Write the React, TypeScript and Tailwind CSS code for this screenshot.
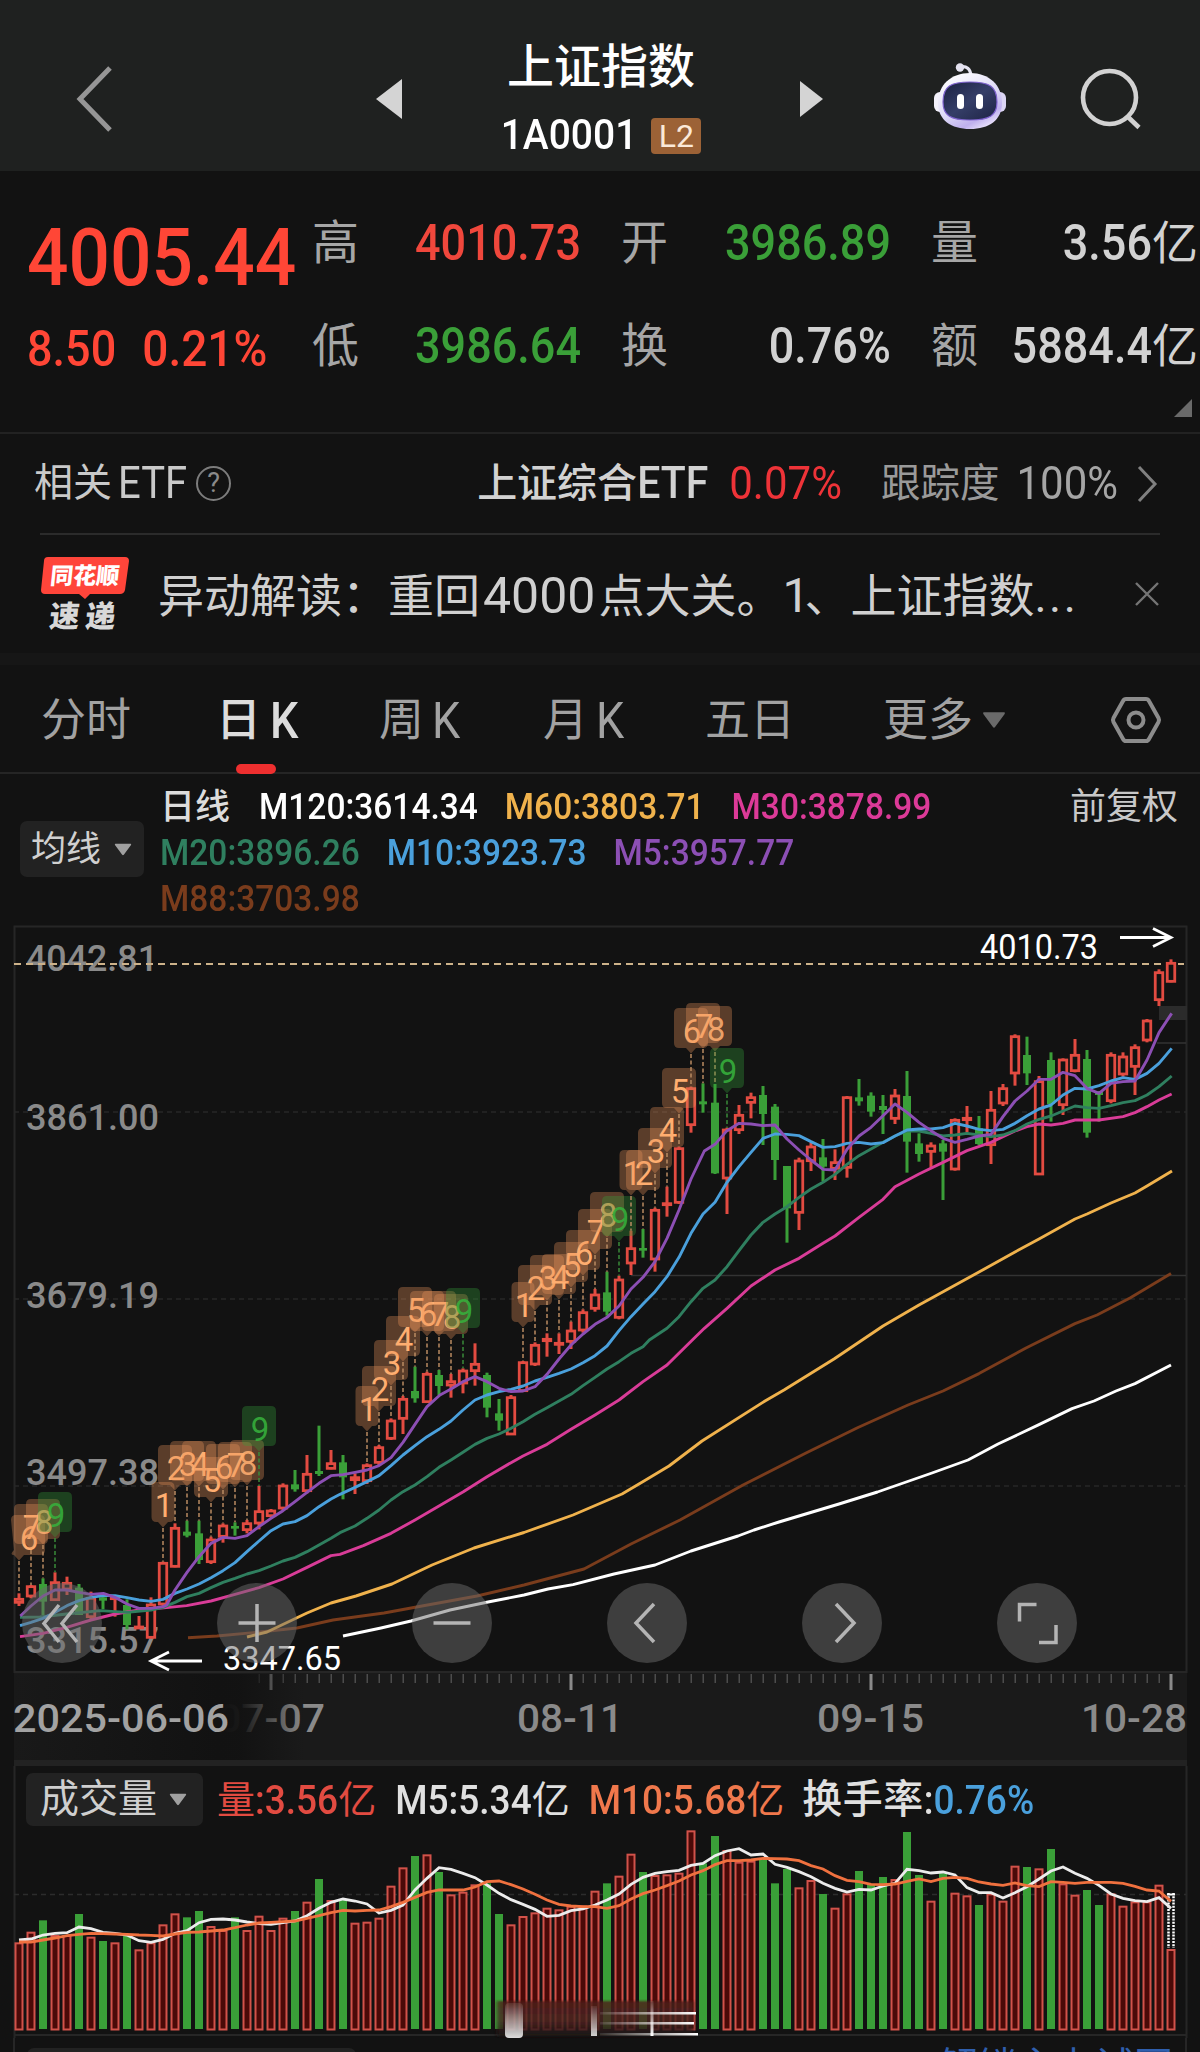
import React from "react";
import clsx from "clsx";

const STEP = 12;
const FIRST_X = 19;
const RED = "#e24b41";
const GREEN = "#3a9f38";
const FONT = "Roboto, 'Noto Sans CJK SC', sans-serif";

type Candle = ["r" | "g", number, number, number, number];
type Point = [number, number];

/**
 * Candles: direction, high, body top, body bottom, low.
 * Values are thirds of a pixel below the block's base line.
 */
const CANDLE_BLOCKS: { base: number; rows: Candle[] }[] = [
  {
    base: 1360,
    rows: [
      ["r", 700, 715, 730, 738], ["r", 675, 677, 711, 715], ["g", 655, 672, 725, 765],
      ["r", 637, 665, 722, 722], ["r", 650, 667, 690, 705], ["g", 672, 683, 765, 765],
      ["r", 695, 712, 773, 778], ["g", 705, 712, 722, 748], ["r", 705, 710, 718, 770],
      ["g", 718, 735, 795, 808], ["r", 768, 798, 805, 805], ["r", 712, 732, 835, 835],
      ["r", 605, 607, 735, 740], ["r", 490, 502, 622, 622], ["g", 482, 515, 527, 532],
      ["g", 482, 520, 600, 612], ["r", 530, 537, 608, 612], ["r", 490, 495, 532, 548],
      ["g", 487, 498, 506, 527], ["r", 480, 488, 512, 520], ["r", 378, 452, 492, 508],
      ["r", 447, 450, 470, 472], ["r", 370, 375, 447, 450], ["g", 330, 373, 388, 395],
      ["r", 285, 340, 395, 400], ["g", 197, 333, 342, 348], ["r", 270, 308, 328, 328],
      ["g", 285, 307, 352, 418], ["r", 340, 350, 362, 402],
    ],
  },
  {
    base: 1180,
    rows: [
      ["r", 850, 854, 905, 912], ["r", 795, 800, 850, 855], ["r", 715, 720, 778, 780],
      ["r", 648, 655, 718, 762], ["g", 560, 633, 655, 668], ["r", 575, 580, 668, 668],
      ["g", 570, 585, 618, 645], ["r", 582, 602, 618, 653], ["r", 565, 570, 612, 640],
      ["r", 490, 550, 575, 617], ["g", 578, 585, 683, 712], ["g", 657, 700, 722, 752],
      ["r", 645, 650, 765, 765], ["r", 543, 545, 635, 635], ["r", 487, 493, 555, 558],
      ["r", 460, 475, 485, 530], ["r", 460, 487, 495, 522], ["r", 425, 450, 487, 507],
      ["r", 388, 395, 453, 458], ["r", 327, 342, 388, 395], ["g", 275, 337, 395, 407],
      ["r", 287, 297, 415, 418], ["r", 152, 203, 252, 285], ["g", 147, 204, 212, 233],
      ["r", 83, 88, 240, 275], ["r", 20, 68, 76, 110],
    ],
  },
  {
    base: 980,
    rows: [
      ["r", 500, 503, 670, 672], ["r", 320, 323, 437, 458], ["g", 310, 364, 373, 398],
      ["g", 312, 368, 580, 582], ["r", 443, 447, 597, 702], ["r", 375, 403, 452, 462],
      ["r", 338, 350, 370, 415], ["g", 318, 345, 402, 495], ["g", 372, 380, 540, 600],
      ["g", 558, 558, 685, 788], ["r", 533, 540, 700, 750], ["r", 487, 498, 545, 573],
      ["g", 477, 532, 560, 603], ["r", 508, 545, 568, 600], ["r", 348, 350, 565, 593],
      ["g", 297, 352, 364, 377], ["g", 337, 347, 395, 410], ["g", 345, 378, 390, 462],
      ["r", 327, 345, 418, 432], ["g", 273, 348, 485, 578],
    ],
  },
  {
    base: 920,
    rows: [
      ["g", 640, 670, 702, 725], ["r", 667, 675, 697, 743], ["g", 660, 670, 695, 840],
      ["r", 595, 598, 750, 752], ["r", 558, 592, 602, 637], ["g", 588, 625, 672, 675],
      ["r", 513, 568, 677, 732], ["r", 492, 503, 552, 558], ["r", 343, 347, 462, 497],
      ["g", 350, 405, 460, 495], ["r", 468, 482, 765, 765], ["g", 397, 420, 552, 605],
      ["r", 415, 417, 557, 585], ["r", 357, 403, 455, 457], ["g", 390, 417, 638, 653],
      ["g", 513, 515, 525, 605], ["r", 397, 403, 545, 550], ["r", 397, 408, 465, 470],
      ["r", 373, 380, 442, 525], ["r", 297, 300, 363, 367], ["r", 148, 155, 242, 258],
      ["r", 118, 127, 187, 187],
    ],
  },
];

const CANDLES = CANDLE_BLOCKS.flatMap(({ base, rows }) =>
  rows.map(([dir, high, top, bottom, low]) => ({
    dir,
    high: base + high / 3,
    top: base + top / 3,
    bottom: base + bottom / 3,
    low: base + low / 3,
  }))
);

/** Nine-turn counters: first candle index and the top of every badge */
const COUNTS: { from: number; start: number; tops: number[] }[] = [
  { from: 0, start: 6, tops: [1515, 1504, 1499, 1492] },
  { from: 12, start: 1, tops: [1482, 1445, 1441, 1441, 1457, 1444, 1442, 1440, 1406] },
  { from: 29, start: 1, tops: [1386, 1366, 1340, 1316, 1287, 1291, 1291, 1294, 1288] },
  { from: 42, start: 1, tops: [1282, 1265, 1255, 1254, 1242, 1230, 1209, 1192, 1196] },
  { from: 51, start: 1, tops: [1150, 1150, 1128, 1107, 1068, 1008, 1003, 1006, 1048] },
];

/** Scales a piece of a line, given in thirds of a pixel, to the chart */
const piece = (x: number, y: number, pts: Point[]): Point[] =>
  pts.map(([px, py]) => [x + px / 3, y + py / 3]);

const AVERAGES: { color: string; points: Point[] }[] = [
  {
    color: "#ffffff",
    points: [
      [343, 1636], [381, 1628], [411, 1621], [450, 1610], [488, 1602], [524, 1595], [548, 1589], [573, 1584.6],
      [614, 1574], [655, 1565], [691, 1551], [738, 1536], [754, 1530], [779, 1522], [839, 1504], [877.5, 1492],
      [932, 1473], [968, 1460], [998, 1444], [1039, 1424.6], [1072, 1408.6], [1094, 1401], [1116, 1391],
      [1135, 1383.6], [1171, 1365],
    ],
  },
  {
    color: "#7a3c1c",
    points: [
      [188, 1637.7], [217, 1636], [260, 1632], [297, 1628], [333, 1620], [384, 1613], [422, 1606], [477, 1596],
      [524, 1585], [584, 1569], [631, 1544], [680, 1520], [743, 1485], [806, 1453], [858, 1427.5], [908, 1405],
      [943, 1391], [979, 1373.6], [1026, 1348], [1075, 1323.6], [1097, 1315], [1130, 1298], [1171, 1273.6],
    ],
  },
  {
    color: "#f0b24c",
    points: [
      [247, 1637], [267, 1632], [297, 1617.7], [307, 1613], [331, 1603], [356, 1596], [392, 1584], [432, 1565],
      [474, 1548], [524, 1532.5], [573, 1515], [622, 1494], [644, 1481], [669, 1466], [702, 1441], [765, 1401],
      [784, 1390], [834, 1359], [883, 1326], [919, 1305], [979, 1272], [1015, 1252], [1039, 1239], [1075, 1219],
      [1087, 1214], [1111, 1203], [1135, 1193], [1147, 1186], [1172, 1171],
    ],
  },
  {
    color: "#d93c98",
    points: [
      ...piece(0, 1360, [[60, 830], [129, 820], [200, 802], [273, 780], [345, 762], [417, 750], [500, 743], [560, 737], [633, 723], [705, 703], [777, 683], [849, 657], [921, 622], [993, 587]]),
      ...piece(340, 1180, [[0, 1123], [70, 1097], [153, 1060], [225, 1020], [297, 978], [370, 935], [441, 890], [513, 848], [549, 828], [621, 793], [693, 748], [765, 705], [837, 660], [909, 605], [981, 555]]),
      ...piece(600, 980, [[277, 1080], [313, 1045], [381, 985], [453, 918], [525, 870], [597, 835], [669, 790], [705, 768], [777, 712], [849, 658]]),
      ...piece(880, 920, [[45, 800], [117, 762], [189, 727], [261, 692], [333, 667], [405, 633], [441, 620], [477, 612], [513, 615], [549, 610], [585, 600], [657, 600], [729, 590], [765, 578], [801, 560], [837, 540], [875, 522]]),
    ],
  },
  {
    color: "#2f7f5f",
    points: [
      ...piece(0, 1360, [[60, 772], [120, 771], [200, 762], [300, 752], [381, 757], [453, 750], [489, 742], [525, 727], [561, 710], [597, 700], [633, 683], [669, 667], [705, 655], [741, 642], [777, 632], [813, 618], [849, 603], [885, 592], [921, 575], [957, 555], [993, 535]]),
      ...piece(340, 1180, [[0, 1058], [45, 1038], [81, 1015], [117, 990], [153, 960], [189, 935], [225, 915], [261, 890], [297, 862], [333, 840], [369, 817], [405, 793], [441, 775], [477, 762], [513, 745], [549, 725], [585, 703], [621, 683], [657, 663], [693, 643], [729, 617], [765, 592], [801, 567], [837, 545], [873, 520], [909, 500]]),
      ...piece(600, 980, [[148, 1080], [201, 1045], [237, 1010], [273, 965], [309, 925], [345, 900], [381, 860], [417, 812], [453, 765], [489, 727], [525, 702], [561, 680], [597, 652], [633, 627], [669, 607], [705, 583], [741, 553], [777, 527], [813, 507]]),
      ...piece(880, 920, [[9, 667], [45, 648], [81, 633], [117, 633], [153, 640], [189, 648], [225, 645], [261, 640], [297, 645], [333, 650], [369, 645], [405, 632], [441, 612], [477, 598], [513, 588], [549, 573], [585, 558], [621, 563], [657, 565], [693, 557], [729, 548], [765, 542], [801, 525], [837, 500], [875, 468]]),
    ],
  },
  {
    color: "#4aa0dc",
    points: [
      ...piece(0, 1360, [[60, 797], [93, 787], [129, 775], [165, 757], [201, 737], [237, 722], [273, 712], [310, 707], [345, 707], [381, 713], [417, 720], [453, 724], [489, 718], [525, 700], [561, 687], [597, 672], [633, 653], [669, 632], [705, 608], [741, 575], [777, 543], [813, 512], [849, 492], [885, 485], [921, 467], [957, 440], [993, 417]]),
      ...piece(340, 1180, [[0, 943], [45, 922], [81, 905], [117, 887], [153, 857], [189, 825], [225, 797], [261, 770], [297, 748], [333, 723], [369, 690], [405, 660], [441, 645], [477, 635], [513, 628], [549, 618], [585, 603], [621, 592], [657, 580], [693, 567], [729, 548], [765, 527], [801, 498]]),
      ...piece(600, 980, [[57, 1052], [93, 1010], [129, 972], [165, 935], [201, 890], [237, 832], [273, 760], [309, 702], [345, 667], [381, 607], [417, 560], [453, 517], [489, 475], [525, 462], [561, 463], [597, 467], [633, 485], [669, 502], [705, 500], [741, 490], [777, 487], [813, 492]]),
      ...piece(880, 920, [[9, 668], [45, 648], [81, 630], [117, 627], [153, 627], [189, 623], [225, 610], [261, 618], [297, 628], [333, 632], [369, 628], [405, 610], [441, 587], [477, 567], [513, 555], [549, 525], [585, 505], [621, 507], [657, 497], [693, 483], [729, 473], [765, 478], [801, 460], [837, 430], [875, 385]]),
    ],
  },
  {
    color: "#8c4fb4",
    points: [
      ...piece(0, 1360, [[61, 768], [93, 738], [129, 708], [165, 690], [201, 690], [237, 697], [273, 703], [310, 700], [345, 712], [381, 732], [417, 745], [453, 745], [489, 740], [500, 735], [525, 690], [561, 637], [597, 590], [633, 550], [669, 532], [705, 535], [741, 527], [777, 500], [813, 475], [849, 452], [885, 425], [921, 397], [957, 370], [993, 347]]),
      ...piece(340, 1180, [[9, 884], [45, 877], [81, 870], [117, 857], [153, 833], [189, 787], [225, 733], [261, 680], [300, 645], [333, 627], [369, 605], [405, 590], [441, 605], [477, 625], [513, 635], [549, 633], [585, 620], [621, 583], [657, 537], [693, 495], [729, 462], [765, 433], [801, 412]]),
      ...piece(600, 980, [[57, 978], [93, 927], [129, 892], [165, 845], [201, 775], [237, 690], [273, 597], [313, 513], [345, 493], [381, 452], [417, 430], [453, 432], [489, 437], [525, 435], [561, 477], [597, 510], [633, 540], [669, 568], [705, 570], [741, 508], [777, 468], [813, 442], [849, 407]]),
      ...piece(880, 920, [[45, 552], [81, 577], [117, 607], [153, 632], [189, 655], [225, 667], [261, 658], [297, 648], [333, 643], [369, 590], [405, 543], [441, 513], [477, 478], [513, 478], [549, 457], [585, 467], [621, 505], [657, 520], [693, 490], [729, 485], [765, 483], [801, 420], [837, 338], [875, 280]]),
    ],
  },
];

/** Tops of the volume bars, thirds of a pixel below y = 1740 */
const VOLUMES = [
  607, 575, 541, 585, 585, 522, 590, 603, 607, 585, 628, 607, 553, 520, 532, 513, 558, 570, 532, 570, 527, 570, 533,
  513, 485, 417, 480, 480, 548, 545, 533, 437, 382, 348, 343, 396, 463, 455, 433, 430, 522, 553, 528, 517, 503, 508,
  497, 497, 452, 430, 407, 341, 396, 405, 403, 398, 271, 370, 288, 330, 365, 362, 355, 430, 387, 442, 420, 462, 503,
  460, 393, 432, 411, 417, 276, 405, 482, 400, 458, 466, 495, 460, 482, 377, 381, 385, 327, 430, 464, 450, 495, 460,
  497, 484, 484, 434, 627,
];
const GREEN_VOLUMES = new Set([
  2, 5, 7, 9, 14, 15, 18, 23, 25, 27, 33, 35, 39, 40, 49, 52, 57, 58, 62, 63, 64, 67, 70, 71, 72, 74, 75, 77, 80, 84,
  86, 89, 90,
]);
const VOLUME_MA5 = [
  600, 597, 585, 580, 578, 561, 566, 577, 580, 585, 602, 607, 598, 580, 572, 548, 538, 537, 540, 546, 551, 553, 548,
  543, 527, 505, 487, 477, 483, 492, 519, 511, 495, 450, 415, 383, 388, 400, 413, 435, 460, 479, 493, 508, 529, 526,
  512, 507, 495, 480, 462, 433, 412, 400, 395, 391, 376, 370, 347, 333, 326, 345, 342, 373, 382, 395, 410, 430, 445,
  456, 448, 450, 438, 430, 388, 392, 399, 396, 405, 443, 458, 458, 474, 458, 440, 417, 393, 381, 400, 415, 436, 462,
  475, 482, 485, 473, 505,
];
const VOLUME_MA10 = [
  606, 606, 600, 594, 587, 583, 580, 581, 582, 583, 585, 586, 588, 582, 577, 576, 573, 570, 563, 555, 549, 547, 545,
  543, 535, 527, 518, 511, 513, 511, 510, 500, 487, 472, 457, 450, 450, 450, 441, 425, 423, 434, 447, 463, 480, 493,
  498, 500, 500, 505, 497, 477, 461, 450, 437, 423, 405, 392, 374, 362, 362, 360, 355, 356, 357, 362, 377, 387, 407,
  421, 425, 433, 434, 432, 424, 417, 425, 415, 412, 415, 426, 432, 436, 429, 437, 440, 425, 427, 430, 427, 427, 427,
  430, 439, 450, 453, 484,
];

const barX = (i: number) => FIRST_X + i * STEP;
const toPoints = (pts: Point[]) => pts.map((p) => p.join(",")).join(" ");
const volumeLine = (values: number[]) => toPoints(values.map((v, i) => [barX(i), 1740 + v / 3]));

/** Tall narrow numerals */
function Num({ children, className }: { children: React.ReactNode; className?: string }) {
  return (
    <span className={clsx("inline-block scale-y-110 whitespace-nowrap leading-none", className)}>{children}</span>
  );
}

function Caret({ className }: { className?: string }) {
  return (
    <svg viewBox="0 0 20 14" className={className}>
      <path d="M1.5 0.5h17q1 0.3 0.4 1.4l-8 11q-0.9 1-1.8 0l-8-11q-0.6-1.1 0.4-1.4z" fill="currentColor" />
    </svg>
  );
}

function RobotIcon() {
  return (
    <svg viewBox="0 0 76 72" className="mb-[3px] ml-[108px] h-[72px] w-[76px]">
      <defs>
        <linearGradient id="shell" x1="0.2" y1="0" x2="0.8" y2="1">
          <stop offset="0" stopColor="#ffffff" />
          <stop offset="0.55" stopColor="#dcd8f6" />
          <stop offset="0.8" stopColor="#bfb0ee" />
          <stop offset="1" stopColor="#f4f0ff" />
        </linearGradient>
        <linearGradient id="visor" x1="0" y1="0" x2="1" y2="1">
          <stop offset="0" stopColor="#1b2140" />
          <stop offset="0.5" stopColor="#353e68" />
          <stop offset="1" stopColor="#1d2344" />
        </linearGradient>
      </defs>
      <path d="M29 6q10-2 11 9" fill="none" stroke="#e6e4f2" strokeWidth="3.2" />
      <circle cx="29" cy="6.5" r="4.2" fill="#e4e2f0" />
      <rect x="3" y="31" width="12" height="20" rx="6" fill="#f3f1fb" />
      <rect x="63" y="31" width="12" height="20" rx="6" fill="#dcd6f4" />
      <path d="M39 12C58 12 71 24 71 42C71 59 58 68 39 68C20 68 7 59 7 42C7 24 20 12 39 12Z" fill="url(#shell)" />
      <path
        d="M39 21C58 21 66 25 66 41C66 55 58 59 39 59C20 59 12 55 12 41C12 25 20 21 39 21Z"
        fill="url(#visor)"
        stroke="#7f63cf"
        strokeWidth="1.2"
      />
      <rect x="26" y="33" width="7" height="15" rx="3.5" fill="#fff" />
      <rect x="45" y="33" width="7" height="15" rx="3.5" fill="#fff" />
    </svg>
  );
}

function Header() {
  return (
    <header className="flex h-[171px] items-center bg-[#1f2120] pt-[26px]">
      <svg viewBox="0 0 40 66" className="ml-[75px] mr-px h-[66px] w-10">
        <path d="M35 2L5 33L35 64" fill="none" stroke="#969696" strokeWidth="5" />
      </svg>
      <svg viewBox="0 0 26 40" className="ml-[260px] h-10 w-[26px]">
        <path d="M26 0v40L0 20z" fill="#d4d4d4" />
      </svg>
      <div className="flex w-[398px] flex-col items-center pt-[5px] text-white">
        <div className="text-[47px] font-medium leading-[69px]">上证指数</div>
        <div className="flex h-[69px] items-center gap-[14px]">
          <Num className="text-[39px] font-medium">1A0001</Num>
          <span className="flex h-9 w-[50px] items-center justify-center rounded-[4px] bg-[#9c6236] text-[32px] leading-none text-[#fbe9d9]">
            L2
          </span>
        </div>
      </div>
      <svg viewBox="0 0 23 36" className="h-9 w-[23px]">
        <path d="M0 0v36l23-18z" fill="#d4d4d4" />
      </svg>
      <RobotIcon />
      <svg viewBox="0 0 62 62" className="ml-[73px] h-[62px] w-[62px] text-[#d2d2d2]">
        <circle cx="29.5" cy="29.5" r="26.5" fill="none" stroke="currentColor" strokeWidth="4.6" />
        <path d="M47.5 48.5L59 59.5" stroke="currentColor" strokeWidth="4.6" />
      </svg>
    </header>
  );
}

const QUOTES = [
  { label: "高", value: "4010.73", tone: "text-[#f0473c]" },
  { label: "开", value: "3986.89", tone: "text-[#3a9f38]" },
  { label: "量", value: "3.56", unit: "亿", tone: "text-[#d2d2d2]" },
  { label: "低", value: "3986.64", tone: "text-[#3a9f38]" },
  { label: "换", value: "0.76%", tone: "text-[#d2d2d2]" },
  { label: "额", value: "5884.4", unit: "亿", tone: "text-[#d2d2d2]" },
];

function QuoteBoard() {
  return (
    <section className="relative flex h-[261px]">
      <div className="w-[312px] pl-[27px] pt-[42px] text-[#ff4636]">
        <div className="flex h-[90px] items-center">
          <Num className="text-[73px] font-medium">4005.44</Num>
        </div>
        <div className="flex h-[90px] items-center gap-[26px]">
          <Num className="text-[45px] font-medium">8.50</Num>
          <Num className="text-[46px] font-medium">0.21%</Num>
        </div>
      </div>
      <div className="grid grid-cols-[269px_270px_267px] content-start gap-x-10 pt-5">
        {QUOTES.map((q) => (
          <div key={q.label} className="flex h-[103px] items-center justify-between">
            <span className="text-[47px] leading-none text-[#a6a6a6]">{q.label}</span>
            <span className={clsx("flex items-center font-medium", q.tone)}>
              <Num className="text-[45px]">{q.value}</Num>
              {q.unit && <span className="text-[46px] font-normal leading-none">{q.unit}</span>}
            </span>
          </div>
        ))}
      </div>
      <svg viewBox="0 0 18 18" className="absolute bottom-[15px] right-2 h-[18px] w-[18px]">
        <path d="M18 0v18H0z" fill="#6a6a6a" />
      </svg>
    </section>
  );
}

function EtfRow() {
  return (
    <section className="flex h-[101px] items-center border-t-2 border-[#222] pl-[34px] text-[39px] leading-none text-[#c9c9c9]">
      <span>相关</span>
      <Num className="ml-[6px] text-[40px]">ETF</Num>
      <span className="ml-[9px] flex h-[35px] w-[35px] items-center justify-center rounded-full border-2 border-[#7c7c7c] text-[27px] leading-none text-[#8a8a8a]">
        ?
      </span>
      <span className="ml-[246px] flex items-center text-[40px] font-medium text-[#d2d2d2]">
        上证综合<Num className="text-[41px]">ETF</Num>
      </span>
      <Num className="ml-[21px] text-[42px] text-[#ee3338]">0.07%</Num>
      <span className="ml-[39px] text-[39.5px] text-[#9a9a9a]">跟踪度</span>
      <Num className="ml-[17px] text-[42px] text-[#a5a5a5]">100%</Num>
      <svg viewBox="0 0 22 38" className="ml-[18px] h-[38px] w-[22px]">
        <path d="M3 2l16 17L3 36" fill="none" stroke="#808080" strokeWidth="3" />
      </svg>
    </section>
  );
}

function NewsRow() {
  return (
    <section className="mx-10 flex h-[120px] items-center border-t-2 border-[#2b2b2b]">
      <div className="relative flex h-[76px] w-[90px] flex-col">
        <svg viewBox="0 0 90 44" className="absolute left-0 top-0 h-[44px] w-[90px]">
          <path d="M8 1H85q4 0 4 4L85 34q-1 4-5 4H50l-5 5-6-5H5q-4 0-4-4L4 5q0-4 4-4z" fill="#ff453a" />
        </svg>
        <span className="relative flex h-[38px] -skew-x-6 items-center justify-center pt-0.5 text-[23px] font-black leading-none text-white">
          同花顺
        </span>
        <span className="relative flex h-[38px] -skew-x-6 items-center justify-center gap-[6px] pr-1 pt-[7px] text-[30px] font-black leading-none text-[#d8d8d8]">
          <span>速</span>
          <span>递</span>
        </span>
      </div>
      <div className="ml-[28px] flex items-center whitespace-nowrap pt-[3px] text-[46px] leading-none text-[#d0d0d0]">
        <span>异动解读：重回</span>
        <span className="ml-[3px] mr-[3px] text-[50px]">4000</span>
        <span>点大关。</span>
        <span className="-mr-[5px] text-[48px]">1</span>
        <span>、上证指数</span>
        <span className="tracking-[2.5px]">...</span>
      </div>
      <svg viewBox="0 0 26 26" className="ml-auto h-[26px] w-[26px]">
        <path d="M2 2l22 22M24 2L2 24" stroke="#757575" strokeWidth="2.4" />
      </svg>
    </section>
  );
}

function Tabs() {
  return (
    <nav className="flex h-[109px] items-center border-b-2 border-[#252525] pt-[3px] text-[45px] leading-none text-[#a2a2a2]">
      <span className="ml-[41px] w-[175px]">分时</span>
      <span className="relative flex h-full w-[163px] items-center gap-[9px] font-medium text-[#dcdcdc]">
        日<Num>K</Num>
        <i className="absolute -bottom-0.5 left-[20px] h-[10px] w-[40px] rounded-[5px] bg-[#ee2f2f]" />
      </span>
      <span className="flex w-[164px] items-center gap-2">
        周<Num>K</Num>
      </span>
      <span className="flex w-[162px] items-center gap-2">
        月<Num>K</Num>
      </span>
      <span className="w-[178px]">五日</span>
      <span className="w-[99px]">更多</span>
      <Caret className="h-[18px] w-[24px] text-[#6a6a6a]" />
      <svg viewBox="0 0 52 50" className="ml-[104px] h-[50px] w-[52px]" fill="none" stroke="#8c8c8c">
        <path d="M16 4H36Q38 4 39 6L48.500 23Q49.500 25 48.500 27L39 44Q38 46 36 46H16Q14 46 13 44L3.500 27Q2.500 25 3.500 23L13 6Q14 4 16 4Z" strokeWidth="4" />
        <circle cx="26" cy="25" r="7.500" strokeWidth="4" />
      </svg>
    </nav>
  );
}

function AverageLegend() {
  return (
    <section className="flex h-[151px] text-[33.5px] font-medium leading-none">
      <button className="ml-5 mt-[47px] flex h-[56px] w-[124px] items-center rounded-[7px] bg-[#222] pl-[11px] text-[35px] font-normal text-[#d0d0d0]">
        均线
        <Caret className="ml-[13px] h-[13px] w-[18px] text-[#a0a0a0]" />
      </button>
      <div className="ml-4 flex w-[910px] flex-col pt-[10px]">
        <div className="flex h-[46px] items-center gap-[27px]">
          <span className="mr-[2px] text-[35px] text-[#dcdcdc]">日线</span>
          <Num className="text-white">M120:3614.34</Num>
          <Num className="text-[#f0b24c]">M60:3803.71</Num>
          <Num className="text-[#dc3a98]">M30:3878.99</Num>
        </div>
        <div className="flex h-[46px] items-center gap-[27px]">
          <Num className="text-[#2f7f5f]">M20:3896.26</Num>
          <Num className="text-[#4aa0dc]">M10:3923.73</Num>
          <Num className="text-[#8c4fb4]">M5:3957.77</Num>
        </div>
        <div className="flex h-[46px] items-center">
          <Num className="text-[#7a3c1c]">M88:3703.98</Num>
        </div>
      </div>
      <span className="mt-[15px] text-[36px] font-normal text-[#c8c8c8]">前复权</span>
    </section>
  );
}

function CountBadge({ index, count, top }: { index: number; count: number; top: number }) {
  const x = barX(index);
  const half = count === 1 ? 11.5 : 17;
  // the first badge is kept inside the chart frame
  const cx = Math.max(x, 28);
  const last = count === 9;
  const high = CANDLES[index].high;
  const left = cx - half;
  const right = cx + half;
  const bottom = top + 40;
  return (
    <g>
      <path
        d={`M${x} ${top + 46}V${high}`}
        stroke={last ? "#3a8a3a" : "#b98a62"}
        strokeWidth="1.500"
        strokeDasharray="4 2.500"
      />
      <path
        d={`M${left + 5} ${top}H${right - 5}q5 0 5 5V${bottom - 5}q0 5 -5 5H${x + 5}L${x} ${bottom + 5.5}L${x - 5} ${bottom}H${Math.min(left + 5, x - 5)}q-5 0 ${left + 5 > x - 5 ? 0 : -5} -5L${left} ${top + 5}q0 -5 5 -5z`}
        fill={last ? "#34a03a" : "#e8935a"}
        fillOpacity={last ? 0.33 : 0.34}
      />
      <text
        x={cx + 1}
        y={top + 34.5}
        textAnchor="middle"
        fontSize="33"
        fontFamily="Roboto, sans-serif"
        fill={last ? "#37b03c" : "#ffae70"}
        fillOpacity={count === 8 || last ? 0.9 : 1}
      >
        {count}
      </text>
    </g>
  );
}

function AxisLabel({ x, y, w, size = 37, weight = 500, fill = "#8a8a8a", children }: {
  x: number;
  y: number;
  w: number;
  size?: number;
  weight?: number;
  fill?: string;
  children: string;
}) {
  return (
    <text
      x={x}
      y={y}
      fontSize={size}
      fontWeight={weight}
      fontFamily={FONT}
      textLength={w}
      lengthAdjust="spacingAndGlyphs"
      fill={fill}
    >
      {children}
    </text>
  );
}

const CONTROLS = [
  { name: "first", d: "M37 22L22 40.500L37 59M55 22L40 40.500L55 59" },
  { name: "zoom-in", d: "M40 21V59M21.500 40H58.500" },
  { name: "zoom-out", d: "M21.500 40H58.500" },
  { name: "prev", d: "M47 21L29 40L47 59" },
  { name: "next", d: "M34 21L52 40L34 59" },
  { name: "fullscreen", d: "M39.500 21.500H22.500V38.500M42 59.500H59V42" },
];

function PriceChart() {
  return (
    <section className="relative h-[748px]">
      <svg viewBox="0 925 1200 748" className="h-[748px] w-full">
        <path d="M14.500 1672V926.500H1186.500V1672z" fill="none" stroke="#262626" strokeWidth="2" />
        {[1112, 1299, 1486].map((y) => (
          <path key={y} d={`M14 ${y}H1186`} stroke="#272727" strokeWidth="1.500" strokeDasharray="5 4" />
        ))}
        <path d="M631 1275.500H1186M1157 1043H1186" stroke="#333" strokeWidth="1.500" />
        <rect x="1159" y="1006" width="28" height="14" fill="#2b2b2b" />
        <AxisLabel x={26} y={971} w={132}>4042.81</AxisLabel>
        <AxisLabel x={26} y={1130} w={133}>3861.00</AxisLabel>
        <AxisLabel x={26} y={1308} w={133}>3679.19</AxisLabel>
        <AxisLabel x={26} y={1485} w={133}>3497.38</AxisLabel>
        <AxisLabel x={26} y={1653} w={133}>3315.57</AxisLabel>
        <path d="M14 964H1184" stroke="#cdb28a" strokeWidth="1.800" strokeDasharray="7 5" />

        {CANDLES.map((c, i) => {
          const x = barX(i);
          if (c.dir === "g") {
            return (
              <g key={i} fill={GREEN}>
                <rect x={x - 1.5} y={c.high} width="3" height={c.low - c.high} />
                <rect x={x - 4} y={c.top} width="8" height={c.bottom - c.top} />
              </g>
            );
          }
          return (
            <g key={i}>
              <rect x={x - 1.5} y={c.high} width="3" height={c.low - c.high} fill={RED} />
              <rect
                x={x - 3.75}
                y={c.top + 1}
                width="7.500"
                height={Math.max(c.bottom - c.top - 2, 1)}
                fill="#121212"
                stroke={RED}
                strokeWidth="2.800"
              />
            </g>
          );
        })}

        {AVERAGES.map((a) => (
          <polyline
            key={a.color}
            points={toPoints(a.points)}
            fill="none"
            stroke={a.color}
            strokeWidth="2.900"
            strokeLinejoin="round"
          />
        ))}

        {COUNTS.map((run) =>
          run.tops.map((top, k) => (
            <CountBadge key={`${run.from}-${k}`} index={run.from + k} count={run.start + k} top={top} />
          ))
        )}

        <AxisLabel x={980} y={959} w={118} size={35} weight={400} fill="#fff">4010.73</AxisLabel>
        <path d="M1120 937.500H1170M1153 928.500L1171 937.500L1153 946.500" fill="none" stroke="#fff" strokeWidth="2.800" />
        <AxisLabel x={223} y={1670} w={118} size={34} weight={400} fill="#fff">3347.65</AxisLabel>
        <path d="M202 1661H152M169 1652L151 1661L169 1670" fill="none" stroke="#fff" strokeWidth="2.800" />
      </svg>

      {/* Floating controls over the chart */}
      <div className="absolute bottom-[10px] left-[22px] flex w-[1055px] justify-between">
        {CONTROLS.map((c) => (
          <button key={c.name} className="h-20 w-20 rounded-full bg-[#696969]/50">
            <svg viewBox="0 0 80 80" fill="none" stroke="#b4b4b4" strokeWidth="3.500">
              <path d={c.d} />
            </svg>
          </button>
        ))}
      </div>
    </section>
  );
}

function DateAxis() {
  return (
    <section className="h-[93px]">
      <svg viewBox="0 1673 1200 93" className="h-[93px] w-full">
        <defs>
          <linearGradient id="dateFade" x1="0" x2="1" y1="0" y2="0">
            <stop offset="0" stopColor="#191919" />
            <stop offset="0.7" stopColor="#121212" />
            <stop offset="0.78" stopColor="#121212" stopOpacity="0.95" />
            <stop offset="1" stopColor="#121212" stopOpacity="0" />
          </linearGradient>
        </defs>
        <rect x="14" y="1673" width="1173" height="88" fill="#1a1a1a" />
        <rect x="14" y="1760" width="1173" height="6" fill="#222" />
        {Array.from({ length: 77 }, (_, k) => {
          const i = k + 20;
          const major = (i - 21) % 25 === 0;
          return (
            <rect
              key={i}
              x={barX(i) - (major ? 1.5 : 0.5)}
              y="1674"
              width={major ? 3 : 1.5}
              height={major ? 16 : 9}
              fill={major ? "#8a8a8a" : "#4c4c4c"}
            />
          );
        })}
        <AxisLabel x={218} y={1732} w={107} size={39}>07-07</AxisLabel>
        <AxisLabel x={517} y={1732} w={106} size={39}>08-11</AxisLabel>
        <AxisLabel x={817} y={1732} w={107} size={39}>09-15</AxisLabel>
        <AxisLabel x={1081} y={1732} w={106} size={39}>10-28</AxisLabel>
        <rect x="14" y="1674" width="290" height="86" fill="url(#dateFade)" />
        <AxisLabel x={13} y={1732} w={216} size={39} fill="#a2a2a2">2025-06-06</AxisLabel>
      </svg>
    </section>
  );
}

function VolumePanel() {
  return (
    <section className="relative flex-1">
      <div className="flex h-[66px] items-center text-[37px] font-medium leading-none">
        <button className="ml-[26px] flex h-[53px] w-[177px] items-center rounded-[7px] bg-[#222] pl-[14px] text-[39px] font-normal text-[#cfcfcf]">
          成交量
          <Caret className="ml-3 h-[13px] w-[18px] text-[#a0a0a0]" />
        </button>
        <span className="ml-[14px] flex items-center pt-[2px] text-[#e24b41]">
          <span className="text-[38px] font-normal">量</span>
          <Num>:3.56</Num>
          <span className="text-[38px] font-normal">亿</span>
        </span>
        <span className="ml-[19px] flex items-center pt-[2px] text-[#e0e0e0]">
          <Num>M5:5.34</Num>
          <span className="text-[38px] font-normal">亿</span>
        </span>
        <span className="ml-[19px] flex items-center pt-[2px] text-[#f0784c]">
          <Num>M10:5.68</Num>
          <span className="text-[38px] font-normal">亿</span>
        </span>
        <span className="ml-[18px] flex items-center pt-[2px] text-[#e0e0e0]">
          <span className="text-[40px] tracking-[0.5px]">换手率</span>
          <Num>:</Num>
          <Num className="text-[#4aa0dc]">0.76%</Num>
        </span>
      </div>
      <svg viewBox="0 1832 1200 206" className="h-[206px] w-full overflow-visible">
        <defs>
          <filter id="smear" x="-20%" y="-20%" width="140%" height="140%">
            <feGaussianBlur stdDeviation="2 1" />
          </filter>
          <linearGradient id="smudge" x1="0" x2="0" y1="0" y2="1">
            <stop offset="0" stopColor="#4c1c19" />
            <stop offset="0.5" stopColor="#4a2623" />
            <stop offset="1" stopColor="#171212" />
          </linearGradient>
          <linearGradient id="streak" x1="0" x2="1" y1="0" y2="0">
            <stop offset="0" stopColor="#fff" stopOpacity="0.1" />
            <stop offset="1" stopColor="#fff" />
          </linearGradient>
          <linearGradient id="blob" x1="0" x2="0" y1="0" y2="1">
            <stop offset="0" stopColor="#fff" stopOpacity="0.1" />
            <stop offset="1" stopColor="#fff" />
          </linearGradient>
        </defs>
        <path d="M14.500 1766V2038M1186.500 1766V2038M14 2035H1187" stroke="#262626" strokeWidth="2" />
        <path d="M14 1894.500H1186" stroke="#2c2c2c" strokeWidth="1.500" strokeDasharray="5 4" />
        {VOLUMES.map((v, i) => {
          const y = 1740 + v / 3;
          return GREEN_VOLUMES.has(i) ? (
            <rect key={i} x={barX(i) - 4} y={y} width="8" height={2029 - y} fill={GREEN} />
          ) : (
            <rect
              key={i}
              x={barX(i) - 3.5}
              y={y + 1}
              width="7"
              height={2028.5 - y}
              fill="#4a0a08"
              stroke="#d2524a"
              strokeWidth="2"
            />
          );
        })}
        <path d="M1168.500 1893V1948M1173.500 1893V1948" stroke="#fff" strokeWidth="2.500" strokeDasharray="2 1.200" />
        <path d="M1167 1894.500h8" stroke="#fff" strokeWidth="2" />
        <polyline points={volumeLine(VOLUME_MA5)} fill="none" stroke="#ececec" strokeWidth="2.800" />
        <polyline points={volumeLine(VOLUME_MA10)} fill="none" stroke="#f0713f" strokeWidth="2.800" />

        {/* Smeared strip at the bottom of the bars */}
        <rect x="497" y="2001" width="197" height="36" fill="url(#smudge)" fillOpacity="0.82" filter="url(#smear)" />
        <rect x="505" y="2003" width="18" height="35" rx="4" fill="url(#blob)" fillOpacity="0.85" />
        <rect x="591" y="2006" width="6" height="30" fill="url(#blob)" fillOpacity="0.8" />
        <rect x="650.500" y="2001" width="3" height="35" fill="url(#blob)" />
        <rect x="600" y="2012" width="96" height="2.500" fill="url(#streak)" />
        <rect x="600" y="2022" width="94" height="2.500" fill="url(#streak)" />
        <rect x="600" y="2033" width="98" height="2.500" fill="url(#streak)" />
      </svg>
      <div className="mx-[13px] flex h-[14px] items-start justify-between overflow-hidden border-x-2 border-[#262626] px-3 pt-[10px]">
        <span className="h-10 w-[329px] rounded-[7px] bg-[#222]" />
        <span className="text-[39px] leading-none text-[#2f5fae]">解锁主力试图</span>
      </div>
    </section>
  );
}

export default function App() {
  return (
    <main
      className="flex h-[2052px] w-[1200px] flex-col overflow-hidden bg-[#121212] font-[Roboto,'Noto_Sans_CJK_SC',sans-serif]"
      lang="zh-CN"
    >
      <Header />
      <QuoteBoard />
      <EtfRow />
      <NewsRow />
      <div className="h-3 bg-[#161616]" />
      <Tabs />
      <AverageLegend />
      <PriceChart />
      <DateAxis />
      <VolumePanel />
    </main>
  );
}
